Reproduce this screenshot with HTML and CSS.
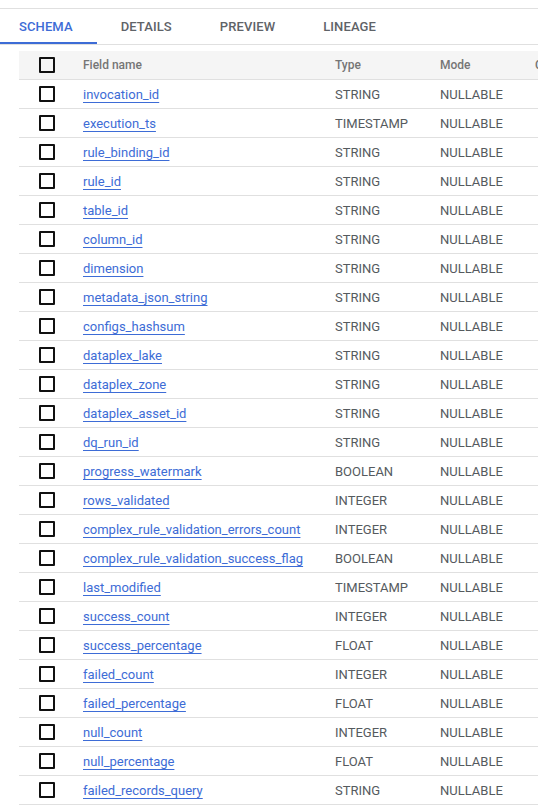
FILE: index.html
```html
<!DOCTYPE html>
<html>
<head>
<meta charset="utf-8">
<link rel="stylesheet" href="styles.css">
</head>
<body>
<div class="page">
  <nav class="tabs">
    <div class="tab active">SCHEMA</div>
    <div class="tab">DETAILS</div>
    <div class="tab">PREVIEW</div>
    <div class="tab">LINEAGE</div>
  </nav>
  <div class="table-wrap">
    <table class="schema">
      <thead>
        <tr>
          <th class="c-check"><span class="box"></span></th>
          <th class="c-name">Field name</th>
          <th class="c-type">Type</th>
          <th class="c-mode">Mode</th>
          <th class="c-coll">Collation</th>
        </tr>
      </thead>
      <tbody>
        <tr><td class="c-check"><span class="box"></span></td><td class="c-name"><a>invocation_id</a></td><td>STRING</td><td>NULLABLE</td><td></td></tr>
        <tr><td class="c-check"><span class="box"></span></td><td class="c-name"><a>execution_ts</a></td><td>TIMESTAMP</td><td>NULLABLE</td><td></td></tr>
        <tr><td class="c-check"><span class="box"></span></td><td class="c-name"><a>rule_binding_id</a></td><td>STRING</td><td>NULLABLE</td><td></td></tr>
        <tr><td class="c-check"><span class="box"></span></td><td class="c-name"><a>rule_id</a></td><td>STRING</td><td>NULLABLE</td><td></td></tr>
        <tr><td class="c-check"><span class="box"></span></td><td class="c-name"><a>table_id</a></td><td>STRING</td><td>NULLABLE</td><td></td></tr>
        <tr><td class="c-check"><span class="box"></span></td><td class="c-name"><a>column_id</a></td><td>STRING</td><td>NULLABLE</td><td></td></tr>
        <tr><td class="c-check"><span class="box"></span></td><td class="c-name"><a>dimension</a></td><td>STRING</td><td>NULLABLE</td><td></td></tr>
        <tr><td class="c-check"><span class="box"></span></td><td class="c-name"><a>metadata_json_string</a></td><td>STRING</td><td>NULLABLE</td><td></td></tr>
        <tr><td class="c-check"><span class="box"></span></td><td class="c-name"><a>configs_hashsum</a></td><td>STRING</td><td>NULLABLE</td><td></td></tr>
        <tr><td class="c-check"><span class="box"></span></td><td class="c-name"><a>dataplex_lake</a></td><td>STRING</td><td>NULLABLE</td><td></td></tr>
        <tr><td class="c-check"><span class="box"></span></td><td class="c-name"><a>dataplex_zone</a></td><td>STRING</td><td>NULLABLE</td><td></td></tr>
        <tr><td class="c-check"><span class="box"></span></td><td class="c-name"><a>dataplex_asset_id</a></td><td>STRING</td><td>NULLABLE</td><td></td></tr>
        <tr><td class="c-check"><span class="box"></span></td><td class="c-name"><a>dq_run_id</a></td><td>STRING</td><td>NULLABLE</td><td></td></tr>
        <tr><td class="c-check"><span class="box"></span></td><td class="c-name"><a>progress_watermark</a></td><td>BOOLEAN</td><td>NULLABLE</td><td></td></tr>
        <tr><td class="c-check"><span class="box"></span></td><td class="c-name"><a>rows_validated</a></td><td>INTEGER</td><td>NULLABLE</td><td></td></tr>
        <tr><td class="c-check"><span class="box"></span></td><td class="c-name"><a>complex_rule_validation_errors_count</a></td><td>INTEGER</td><td>NULLABLE</td><td></td></tr>
        <tr><td class="c-check"><span class="box"></span></td><td class="c-name"><a>complex_rule_validation_success_flag</a></td><td>BOOLEAN</td><td>NULLABLE</td><td></td></tr>
        <tr><td class="c-check"><span class="box"></span></td><td class="c-name"><a>last_modified</a></td><td>TIMESTAMP</td><td>NULLABLE</td><td></td></tr>
        <tr><td class="c-check"><span class="box"></span></td><td class="c-name"><a>success_count</a></td><td>INTEGER</td><td>NULLABLE</td><td></td></tr>
        <tr><td class="c-check"><span class="box"></span></td><td class="c-name"><a>success_percentage</a></td><td>FLOAT</td><td>NULLABLE</td><td></td></tr>
        <tr><td class="c-check"><span class="box"></span></td><td class="c-name"><a>failed_count</a></td><td>INTEGER</td><td>NULLABLE</td><td></td></tr>
        <tr><td class="c-check"><span class="box"></span></td><td class="c-name"><a>failed_percentage</a></td><td>FLOAT</td><td>NULLABLE</td><td></td></tr>
        <tr><td class="c-check"><span class="box"></span></td><td class="c-name"><a>null_count</a></td><td>INTEGER</td><td>NULLABLE</td><td></td></tr>
        <tr><td class="c-check"><span class="box"></span></td><td class="c-name"><a>null_percentage</a></td><td>FLOAT</td><td>NULLABLE</td><td></td></tr>
        <tr><td class="c-check"><span class="box"></span></td><td class="c-name"><a>failed_records_query</a></td><td>STRING</td><td>NULLABLE</td><td></td></tr>
      </tbody>
    </table>
  </div>
</div>
</body>
</html>
```
FILE: styles.css
```css
html, body {
  margin: 0;
  padding: 0;
  background: #ffffff;
  overflow: hidden;
}
body {
  font-family: Roboto, "Liberation Sans", Arial, sans-serif;
  color: #3c4043;
}
.page {
  padding-top: 8px;
}
.tabs {
  display: flex;
  border-top: 1px solid #e0e0e0;
  border-bottom: 1px solid #e0e0e0;
  margin-left: -5px;
  padding-left: 0;
}
.tab {
  height: 35px;
  box-sizing: border-box;
  padding: 0 24px;
  display: flex;
  align-items: center;
  font-size: 13px;
  font-weight: 500;
  color: #5f6368;
  letter-spacing: 0.1px;
  border-bottom: 2px solid transparent;
  padding-top: 2px;
}
.tab.active {
  color: #3d6cd6;
  border-bottom-color: #3d6cd6;
}
.table-wrap {
  margin-top: 6px;
  margin-left: 19px;
  width: 700px;
}
.schema {
  border-collapse: collapse;
  font-size: 13px;
  table-layout: fixed;
  width: 700px;
}
.schema th, .schema td {
  height: 28px;
  padding: 0;
  text-align: left;
  border-bottom: 1px solid #e0e0e0;
  white-space: nowrap;
  vertical-align: middle;
}
.schema thead tr {
  background: #f5f5f5;
}
.schema th {
  font-weight: 500;
  color: #757575;
  font-size: 12px;
}
.schema td {
  color: #555a5e;
}
.c-check {
  width: 64px;
}
.c-name {
  width: 252px;
}
.c-type {
  width: 105px;
}
.c-mode {
  width: 95px;
}
.box {
  display: block;
  width: 12px;
  height: 12px;
  border: 2px solid #111;
  border-radius: 1px;
  margin-left: 20px;
}
.c-name a {
  color: #3d6cd6;
  text-decoration: underline;
  text-decoration-thickness: 1px;
  text-underline-offset: 3px;
  cursor: pointer;
}
```
